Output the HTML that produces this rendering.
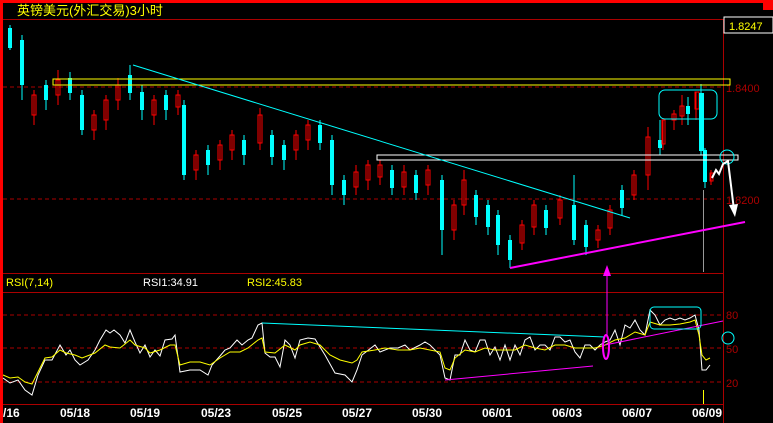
<!DOCTYPE html>
<html><head><meta charset="utf-8"><style>
html,body{margin:0;padding:0;background:#000;width:773px;height:423px;overflow:hidden}
svg{display:block}
text{font-family:"Liberation Sans","Noto Sans CJK SC",sans-serif}
</style></head><body>
<svg width="773" height="423" viewBox="0 0 773 423">
<rect width="773" height="423" fill="#000"/>
<rect x="0" y="0" width="773" height="3" fill="#f00"/>
<rect x="0" y="0" width="3" height="423" fill="#f00"/>
<rect x="763" y="0" width="10" height="10" fill="#f00"/>
<text x="17" y="15" fill="#ff0" font-size="13">英镑美元(外汇交易)3小时</text>
<line x1="3" y1="19.5" x2="723" y2="19.5" stroke="#a00"/>
<line x1="723.5" y1="19" x2="723.5" y2="434" stroke="#a00"/>
<rect x="724" y="17" width="49" height="16" fill="#000" stroke="#fff"/>
<text x="729" y="30" fill="#ff0" font-size="11">1.8247</text>
<line x1="3" y1="87" x2="723" y2="87" stroke="#a00" stroke-dasharray="4,3"/>
<line x1="3" y1="199" x2="723" y2="199" stroke="#a00" stroke-dasharray="4,3"/>
<text x="726" y="92" fill="#a00" font-size="11">1.8400</text>
<text x="726" y="204" fill="#a00" font-size="11">1.8200</text>
<g id="c">
<line x1="10" y1="25" x2="10" y2="50" stroke="#0ff"/><rect x="8" y="28" width="4" height="20" fill="#0ff"/>
<line x1="22" y1="35" x2="22" y2="100" stroke="#0ff"/><rect x="20" y="40" width="4" height="45" fill="#0ff"/>
<line x1="34" y1="90" x2="34" y2="125" stroke="#f00"/><rect x="32" y="95" width="4" height="20" fill="none" stroke="#f00"/>
<line x1="46" y1="80" x2="46" y2="110" stroke="#0ff"/><rect x="44" y="85" width="4" height="15" fill="#0ff"/>
<line x1="58" y1="70" x2="58" y2="105" stroke="#f00"/><rect x="56" y="80" width="4" height="15" fill="none" stroke="#f00"/>
<line x1="70" y1="72" x2="70" y2="100" stroke="#0ff"/><rect x="68" y="78" width="4" height="15" fill="#0ff"/>
<line x1="82" y1="90" x2="82" y2="135" stroke="#0ff"/><rect x="80" y="95" width="4" height="35" fill="#0ff"/>
<line x1="94" y1="110" x2="94" y2="140" stroke="#f00"/><rect x="92" y="115" width="4" height="15" fill="none" stroke="#f00"/>
<line x1="106" y1="95" x2="106" y2="130" stroke="#f00"/><rect x="104" y="100" width="4" height="20" fill="none" stroke="#f00"/>
<line x1="118" y1="78" x2="118" y2="110" stroke="#f00"/><rect x="116" y="85" width="4" height="15" fill="none" stroke="#f00"/>
<line x1="130" y1="65" x2="130" y2="100" stroke="#0ff"/><rect x="128" y="75" width="4" height="18" fill="#0ff"/>
<line x1="142" y1="85" x2="142" y2="120" stroke="#0ff"/><rect x="140" y="92" width="4" height="18" fill="#0ff"/>
<line x1="154" y1="95" x2="154" y2="125" stroke="#f00"/><rect x="152" y="100" width="4" height="15" fill="none" stroke="#f00"/>
<line x1="166" y1="90" x2="166" y2="120" stroke="#0ff"/><rect x="164" y="95" width="4" height="15" fill="#0ff"/>
<line x1="178" y1="90" x2="178" y2="115" stroke="#f00"/><rect x="176" y="95" width="4" height="12" fill="none" stroke="#f00"/>
<line x1="184" y1="100" x2="184" y2="180" stroke="#0ff"/><rect x="182" y="105" width="4" height="70" fill="#0ff"/>
<line x1="196" y1="150" x2="196" y2="180" stroke="#f00"/><rect x="194" y="155" width="4" height="15" fill="none" stroke="#f00"/>
<line x1="208" y1="145" x2="208" y2="175" stroke="#0ff"/><rect x="206" y="150" width="4" height="15" fill="#0ff"/>
<line x1="220" y1="140" x2="220" y2="170" stroke="#f00"/><rect x="218" y="145" width="4" height="15" fill="none" stroke="#f00"/>
<line x1="232" y1="130" x2="232" y2="160" stroke="#f00"/><rect x="230" y="135" width="4" height="15" fill="none" stroke="#f00"/>
<line x1="244" y1="135" x2="244" y2="165" stroke="#0ff"/><rect x="242" y="140" width="4" height="15" fill="#0ff"/>
<line x1="260" y1="108" x2="260" y2="150" stroke="#f00"/><rect x="258" y="115" width="4" height="28" fill="none" stroke="#f00"/>
<line x1="272" y1="130" x2="272" y2="165" stroke="#0ff"/><rect x="270" y="135" width="4" height="22" fill="#0ff"/>
<line x1="284" y1="140" x2="284" y2="170" stroke="#0ff"/><rect x="282" y="145" width="4" height="15" fill="#0ff"/>
<line x1="296" y1="130" x2="296" y2="160" stroke="#f00"/><rect x="294" y="135" width="4" height="15" fill="none" stroke="#f00"/>
<line x1="308" y1="120" x2="308" y2="150" stroke="#f00"/><rect x="306" y="125" width="4" height="15" fill="none" stroke="#f00"/>
<line x1="320" y1="120" x2="320" y2="150" stroke="#0ff"/><rect x="318" y="125" width="4" height="18" fill="#0ff"/>
<line x1="332" y1="135" x2="332" y2="195" stroke="#0ff"/><rect x="330" y="140" width="4" height="45" fill="#0ff"/>
<line x1="344" y1="175" x2="344" y2="205" stroke="#0ff"/><rect x="342" y="180" width="4" height="15" fill="#0ff"/>
<line x1="356" y1="165" x2="356" y2="195" stroke="#f00"/><rect x="354" y="172" width="4" height="15" fill="none" stroke="#f00"/>
<line x1="368" y1="160" x2="368" y2="190" stroke="#f00"/><rect x="366" y="165" width="4" height="15" fill="none" stroke="#f00"/>
<line x1="380" y1="160" x2="380" y2="185" stroke="#f00"/><rect x="378" y="165" width="4" height="12" fill="none" stroke="#f00"/>
<line x1="392" y1="165" x2="392" y2="195" stroke="#0ff"/><rect x="390" y="170" width="4" height="18" fill="#0ff"/>
<line x1="404" y1="165" x2="404" y2="195" stroke="#f00"/><rect x="402" y="172" width="4" height="15" fill="none" stroke="#f00"/>
<line x1="416" y1="170" x2="416" y2="200" stroke="#0ff"/><rect x="414" y="175" width="4" height="18" fill="#0ff"/>
<line x1="428" y1="165" x2="428" y2="195" stroke="#f00"/><rect x="426" y="170" width="4" height="15" fill="none" stroke="#f00"/>
<line x1="442" y1="175" x2="442" y2="255" stroke="#0ff"/><rect x="440" y="180" width="4" height="50" fill="#0ff"/>
<line x1="454" y1="200" x2="454" y2="240" stroke="#f00"/><rect x="452" y="205" width="4" height="25" fill="none" stroke="#f00"/>
<line x1="464" y1="170" x2="464" y2="215" stroke="#f00"/><rect x="462" y="180" width="4" height="25" fill="none" stroke="#f00"/>
<line x1="476" y1="190" x2="476" y2="225" stroke="#0ff"/><rect x="474" y="195" width="4" height="22" fill="#0ff"/>
<line x1="488" y1="200" x2="488" y2="235" stroke="#0ff"/><rect x="486" y="205" width="4" height="22" fill="#0ff"/>
<line x1="498" y1="210" x2="498" y2="255" stroke="#0ff"/><rect x="496" y="215" width="4" height="30" fill="#0ff"/>
<line x1="510" y1="235" x2="510" y2="268" stroke="#0ff"/><rect x="508" y="240" width="4" height="20" fill="#0ff"/>
<line x1="522" y1="220" x2="522" y2="250" stroke="#f00"/><rect x="520" y="225" width="4" height="18" fill="none" stroke="#f00"/>
<line x1="534" y1="200" x2="534" y2="235" stroke="#f00"/><rect x="532" y="205" width="4" height="22" fill="none" stroke="#f00"/>
<line x1="546" y1="205" x2="546" y2="235" stroke="#0ff"/><rect x="544" y="210" width="4" height="18" fill="#0ff"/>
<line x1="560" y1="195" x2="560" y2="225" stroke="#f00"/><rect x="558" y="200" width="4" height="18" fill="none" stroke="#f00"/>
<line x1="574" y1="175" x2="574" y2="245" stroke="#0ff"/><rect x="572" y="205" width="4" height="35" fill="#0ff"/>
<line x1="586" y1="220" x2="586" y2="255" stroke="#0ff"/><rect x="584" y="225" width="4" height="22" fill="#0ff"/>
<line x1="598" y1="225" x2="598" y2="248" stroke="#f00"/><rect x="596" y="230" width="4" height="10" fill="none" stroke="#f00"/>
<line x1="610" y1="205" x2="610" y2="235" stroke="#f00"/><rect x="608" y="210" width="4" height="18" fill="none" stroke="#f00"/>
<line x1="622" y1="185" x2="622" y2="215" stroke="#0ff"/><rect x="620" y="190" width="4" height="18" fill="#0ff"/>
<line x1="634" y1="170" x2="634" y2="200" stroke="#f00"/><rect x="632" y="175" width="4" height="20" fill="none" stroke="#f00"/>
<line x1="648" y1="127" x2="648" y2="190" stroke="#f00"/><rect x="646" y="137" width="4" height="38" fill="none" stroke="#f00"/>
<line x1="660" y1="120" x2="660" y2="155" stroke="#0ff"/><rect x="658" y="140" width="4" height="8" fill="#0ff"/>
<line x1="663" y1="118" x2="663" y2="150" stroke="#f00"/><rect x="662" y="120" width="3" height="24" fill="none" stroke="#f00"/>
<line x1="674" y1="110" x2="674" y2="130" stroke="#f00"/><rect x="672" y="114" width="4" height="6" fill="none" stroke="#f00"/>
<line x1="682" y1="95" x2="682" y2="125" stroke="#f00"/><rect x="680" y="106" width="4" height="10" fill="none" stroke="#f00"/>
<line x1="688" y1="97" x2="688" y2="125" stroke="#0ff"/><rect x="686" y="106" width="4" height="8" fill="#0ff"/>
<line x1="696" y1="92" x2="696" y2="120" stroke="#f00"/><rect x="695" y="92" width="4" height="17" fill="none" stroke="#f00"/>
<line x1="701" y1="84" x2="701" y2="155" stroke="#0ff"/><rect x="699" y="93" width="5" height="58" fill="#0ff"/>
<line x1="705" y1="148" x2="705" y2="188" stroke="#0ff"/><rect x="703" y="150" width="4" height="32" fill="#0ff"/>
<line x1="711" y1="170" x2="711" y2="185" stroke="#f00"/><rect x="710" y="173" width="3" height="8" fill="none" stroke="#f00"/>
</g>
<line x1="703.5" y1="190" x2="703.5" y2="272" stroke="#999"/>
<rect x="53" y="79" width="677" height="6" fill="none" stroke="#ff0"/>
<rect x="377" y="155" width="361" height="5" fill="none" stroke="#fff"/>
<line x1="133" y1="65" x2="630" y2="218" stroke="#0ff"/>
<line x1="510" y1="268" x2="745" y2="222" stroke="#f0f" stroke-width="2"/>
<rect x="659" y="90" width="58" height="29" rx="6" fill="none" stroke="#0ff"/>
<circle cx="727" cy="157" r="7" fill="none" stroke="#0ff"/>
<polyline points="712,178 716,170 719,174 723,164 728,161 734,210" fill="none" stroke="#fff" stroke-width="2"/>
<polygon points="729,205 738,204 735,217" fill="#fff"/>
<line x1="3" y1="273.5" x2="723" y2="273.5" stroke="#a00"/>
<line x1="3" y1="292.5" x2="723" y2="292.5" stroke="#a00"/>
<line x1="3" y1="404.5" x2="723" y2="404.5" stroke="#a00"/>
<text x="6" y="286" fill="#ff0" font-size="11">RSI(7,14)</text>
<text x="143" y="286" fill="#fff" font-size="11">RSI1:34.91</text>
<text x="247" y="286" fill="#ff0" font-size="11">RSI2:45.83</text>
<line x1="3" y1="315" x2="723" y2="315" stroke="#a00" stroke-dasharray="4,3"/>
<line x1="3" y1="348" x2="723" y2="348" stroke="#a00" stroke-dasharray="4,3"/>
<line x1="3" y1="382" x2="723" y2="382" stroke="#a00" stroke-dasharray="4,3"/>
<text x="726" y="319" fill="#a00" font-size="11">80</text>
<text x="726" y="353" fill="#a00" font-size="11">50</text>
<text x="726" y="387" fill="#a00" font-size="11">20</text>
<polyline fill="none" stroke="#fff" points="3,378 10,383 18,380 25,390 32,395 38,375 45,360 52,360 60,345 66,355 70,350 75,360 80,365 88,360 95,350 100,340 106,330 110,333 114,330 120,335 125,343 130,330 135,342 140,353 145,345 150,357 155,350 160,356 165,340 172,339 175,335 180,372 190,370 200,370 208,375 212,365 220,356 225,350 230,348 237,340 242,345 248,340 252,338 258,325 262,323 265,353 270,357 275,357 280,367 285,340 290,345 295,358 300,340 308,338 315,339 325,355 335,373 345,375 352,382 357,370 362,355 375,345 380,352 390,348 398,348 405,345 410,350 420,345 425,342 430,345 440,355 445,378 450,380 455,355 460,355 465,340 470,350 475,352 480,340 485,340 490,355 495,347 500,360 505,345 510,360 515,345 520,355 525,340 530,337 535,350 540,345 545,345 550,350 555,337 560,337 565,342 570,340 575,352 580,358 585,345 590,345 595,350 600,345 605,342 610,340 615,330 620,345 625,325 630,328 635,320 640,330 645,335 650,310 655,315 660,325 665,320 670,318 675,320 680,318 685,320 690,318 695,315 699,330 702,370 706,370 710,365"/>
<polyline fill="none" stroke="#ff0" points="3,375 10,378 18,377 25,382 32,384 38,372 45,358 52,357 60,350 66,353 75,355 82,358 95,353 105,345 110,347 120,348 130,340 135,345 145,348 150,353 160,350 170,345 175,345 180,365 190,362 200,362 210,365 220,358 230,352 240,352 248,348 258,340 262,338 265,352 275,353 285,345 295,350 300,345 310,342 320,345 330,355 340,360 352,363 357,360 362,352 375,350 385,348 398,350 410,350 420,348 440,352 445,368 450,370 455,358 465,350 475,352 485,348 495,350 505,350 515,350 525,345 535,348 545,350 555,345 565,345 575,348 585,348 595,348 605,345 615,340 625,338 635,332 645,335 650,322 660,325 670,325 680,324 690,322 695,320 699,335 702,355 706,360 710,358"/>
<line x1="262" y1="323" x2="605" y2="337" stroke="#0ff"/>
<line x1="445" y1="380" x2="593" y2="366" stroke="#f0f"/>
<line x1="605" y1="345" x2="723" y2="321" stroke="#f0f"/>
<rect x="650" y="307" width="51" height="22" rx="4" fill="none" stroke="#0ff"/>
<circle cx="728" cy="338" r="6" fill="none" stroke="#0ff"/>
<ellipse cx="606" cy="347" rx="3" ry="12" fill="none" stroke="#f0f" stroke-width="2"/>
<line x1="607" y1="335" x2="607" y2="272" stroke="#f0f"/>
<polygon points="603,276 611,276 607,265" fill="#f0f"/>
<line x1="703.5" y1="390" x2="703.5" y2="404" stroke="#ff0"/>
<g fill="#fff" font-size="12" font-weight="bold" font-family="Liberation Mono,monospace">
<text x="3" y="417">/16</text><text x="60" y="417">05/18</text><text x="130" y="417">05/19</text>
<text x="201" y="417">05/23</text><text x="272" y="417">05/25</text><text x="342" y="417">05/27</text>
<text x="412" y="417">05/30</text><text x="482" y="417">06/01</text><text x="552" y="417">06/03</text>
<text x="622" y="417">06/07</text><text x="692" y="417">06/09</text>
</g>
</svg>
</body></html>
